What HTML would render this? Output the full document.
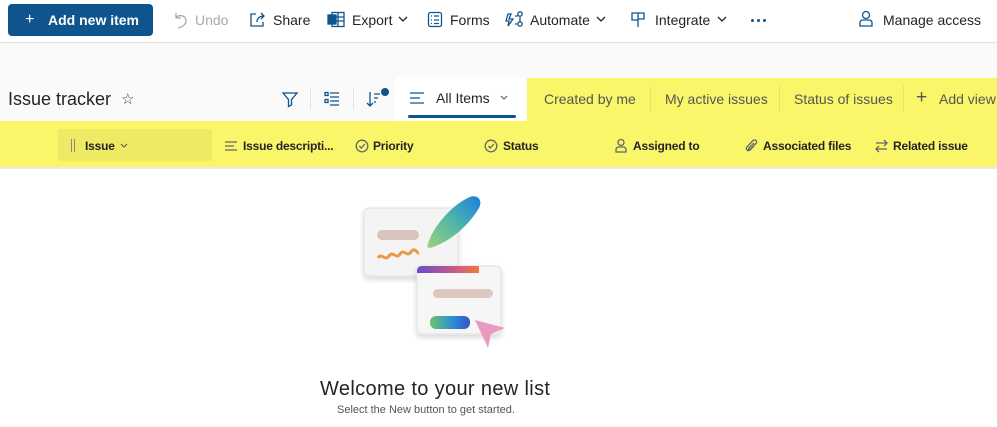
<!DOCTYPE html>
<html><head><meta charset="utf-8"><style>
*{margin:0;padding:0;box-sizing:border-box}
body{width:997px;height:427px;overflow:hidden;background:#fff;font-family:"Liberation Sans",sans-serif;color:#242424;position:relative}
.a{position:absolute;white-space:nowrap}
svg{position:absolute;fill:none;stroke:#0f548c;stroke-width:1.3}
.t{font-size:14px;top:12px}
.h{font-size:12px;font-weight:bold;top:139px;color:#242424;letter-spacing:-0.2px}
.v{font-size:14px;top:91px;color:#555}
.hs{stroke:#555}
</style></head><body>
<!-- top bar -->
<div class="a" style="left:8px;top:4px;width:145px;height:32px;background:#0f548c;border-radius:4px"></div>
<div class="a" style="left:25px;top:11px;font-size:16px;color:#fff;font-weight:300">+</div>
<div class="a" style="left:48px;top:12px;font-size:14px;color:#fff;font-weight:bold">Add new item</div>
<svg style="left:172px;top:11px" width="16" height="18" viewBox="0 0 16 18"><path d="M4 2v5h5M4 7c3-4 10-3 10 3 0 3-3 6-8 7" stroke="#aaa"/></svg>
<div class="a t" style="left:195px;color:#a8a8a8">Undo</div>
<svg style="left:249px;top:11px" width="17" height="17" viewBox="0 0 17 17"><path d="M7 3H2v12h12v-4M8 11c0-4 3-6 7-6M12 2l3 3-3 3"/></svg>
<div class="a t" style="left:273px">Share</div>
<svg style="left:327px;top:11px" width="18" height="17" viewBox="0 0 18 17"><rect x="5" y="1.5" width="12" height="14"/><path d="M5 6h12M5 10h12M11 2v13"/><rect x="1" y="4" width="8" height="9" fill="#0f548c"/></svg>
<div class="a t" style="left:352px">Export</div>
<svg style="left:398px;top:15px" width="10" height="8" viewBox="0 0 10 8"><path d="M1 2l4 4 4-4" stroke="#242424"/></svg>
<svg style="left:427px;top:11px" width="16" height="17" viewBox="0 0 16 17"><rect x="1.5" y="1.5" width="13" height="14" rx="2"/><path d="M4 5h1M7 5h5M4 9h1M7 9h5M4 12.5h1M7 12.5h5"/></svg>
<div class="a t" style="left:450px">Forms</div>
<svg style="left:505px;top:10px" width="19" height="18" viewBox="0 0 19 18"><path d="M3 4l3 0-2 5h4l-5 7 1-5H1zM10 6h3M15 7v5M12 14h-2"/><circle cx="15" cy="4" r="2.2"/><circle cx="15" cy="14" r="2.2"/></svg>
<div class="a t" style="left:530px">Automate</div>
<svg style="left:596px;top:15px" width="10" height="8" viewBox="0 0 10 8"><path d="M1 2l4 4 4-4" stroke="#242424"/></svg>
<svg style="left:630px;top:11px" width="16" height="17" viewBox="0 0 16 17"><path d="M2 2h6v7H2zM8 2h6v6H8zM2 9h6v7"/></svg>
<div class="a t" style="left:655px">Integrate</div>
<svg style="left:717px;top:15px" width="10" height="8" viewBox="0 0 10 8"><path d="M1 2l4 4 4-4" stroke="#242424"/></svg>
<div class="a" style="left:751px;top:19px;width:3px;height:3px;border-radius:50%;background:#0f548c"></div>
<div class="a" style="left:757px;top:19px;width:3px;height:3px;border-radius:50%;background:#0f548c"></div>
<div class="a" style="left:763px;top:19px;width:3px;height:3px;border-radius:50%;background:#0f548c"></div>
<svg style="left:858px;top:10px" width="16" height="18" viewBox="0 0 16 18"><circle cx="8" cy="5" r="3.5"/><path d="M2 16v-3c0-2 1-3 3-3h6c2 0 3 1 3 3v3z"/></svg>
<div class="a t" style="left:883px">Manage access</div>
<div class="a" style="left:0;top:42px;width:997px;height:1px;background:#e1e1e1"></div>
<!-- subheader -->
<div class="a" style="left:0;top:43px;width:997px;height:78px;background:#fafafa"></div>
<div class="a" style="left:8px;top:89px;font-size:18px;color:#242424">Issue tracker</div>
<div class="a" style="left:121px;top:90px;font-size:15px;color:#444">☆</div>
<svg style="left:281px;top:90px" width="18" height="18" viewBox="0 0 18 18"><path d="M2 3h14l-5.5 6.5V15l-3 1.5V9.5z"/></svg>
<div class="a" style="left:310px;top:88px;width:1px;height:22px;background:#e6e6e6"></div>
<svg style="left:324px;top:91px" width="16" height="16" viewBox="0 0 16 16"><path d="M6 2h9M6 6h9M6 10h9M6 14h9M1 1.5h3v3H1zM1 8.5h3v3H1z"/></svg>
<div class="a" style="left:353px;top:88px;width:1px;height:22px;background:#e6e6e6"></div>
<svg style="left:366px;top:90px" width="14" height="18" viewBox="0 0 14 18"><path d="M4 2v14M1 13l3 3 3-3M8 4h6M8 8h4M8 12h2"/></svg>
<div class="a" style="left:381px;top:88px;width:8px;height:8px;border-radius:50%;background:#0f548c"></div>
<div class="a" style="left:395px;top:77px;width:131px;height:44px;background:#fff;border-radius:4px 4px 0 0"></div>
<svg style="left:409px;top:91px" width="16" height="14" viewBox="0 0 16 14"><path d="M1 2h14M1 7h10M1 12h14"/></svg>
<div class="a" style="left:436px;top:90px;font-size:14px;color:#242424">All Items</div>
<svg style="left:500px;top:95px" width="8" height="6" viewBox="0 0 8 6"><path d="M1 1l3 3 3-3" stroke="#555" stroke-width="1"/></svg>
<div class="a" style="left:408px;top:115px;width:108px;height:3px;background:#0f548c;border-radius:2px"></div>
<div class="a" style="left:527px;top:78px;width:470px;height:43px;background:#faf66a"></div>
<div class="a v" style="left:544px">Created by me</div>
<div class="a" style="left:650px;top:86px;width:1px;height:26px;background:#e6e070"></div>
<div class="a v" style="left:665px">My active issues</div>
<div class="a" style="left:779px;top:86px;width:1px;height:26px;background:#e6e070"></div>
<div class="a v" style="left:794px">Status of issues</div>
<div class="a" style="left:903px;top:86px;width:1px;height:26px;background:#e6e070"></div>
<div class="a" style="left:916px;top:87px;font-size:19px;color:#555;font-weight:300">+</div>
<div class="a v" style="left:939px">Add view</div>
<!-- header row -->
<div class="a" style="left:0;top:121px;width:997px;height:47px;background:#faf66a"></div>
<div class="a" style="left:0;top:167px;width:997px;height:2px;background:#eaeaea"></div>
<div class="a" style="left:58px;top:129px;width:154px;height:32px;background:#eeea63;border-radius:3px"></div>
<div class="a" style="left:71px;top:139px;width:1px;height:13px;background:#888"></div>
<div class="a" style="left:74px;top:139px;width:1px;height:13px;background:#888"></div>
<div class="a h" style="left:85px">Issue</div>
<svg style="left:120px;top:143px" width="8" height="6" viewBox="0 0 8 6"><path d="M1 1l3 3 3-3" stroke="#555" stroke-width="1"/></svg>
<svg class="hs" style="left:224px;top:140px" width="14" height="12" viewBox="0 0 14 12"><path d="M1 2h12M1 6h9M1 10h12" stroke="#666"/></svg>
<div class="a h" style="left:243px">Issue descripti...</div>
<svg style="left:355px;top:139px" width="14" height="14" viewBox="0 0 14 14"><circle cx="7" cy="7" r="5.8" stroke="#666"/><path d="M4.3 7l2 2 3.5-4" stroke="#666"/></svg>
<div class="a h" style="left:373px">Priority</div>
<svg style="left:484px;top:139px" width="14" height="14" viewBox="0 0 14 14"><circle cx="7" cy="7" r="5.8" stroke="#666"/><path d="M4.3 7l2 2 3.5-4" stroke="#666"/></svg>
<div class="a h" style="left:503px">Status</div>
<svg style="left:614px;top:138px" width="14" height="15" viewBox="0 0 14 15"><circle cx="7" cy="4.5" r="3" stroke="#666"/><path d="M2 14v-2c0-2 1-3 3-3h4c2 0 3 1 3 3v2z" stroke="#666"/></svg>
<div class="a h" style="left:633px">Assigned to</div>
<svg style="left:745px;top:139px" width="13" height="14" viewBox="0 0 13 14"><path d="M9 4l-5 5c-1 1 0 2.5 1 1.5l6-6c2-2-1-5-3-3L2 8c-2 2 1 5 3 3l4-4" stroke="#666"/></svg>
<div class="a h" style="left:763px">Associated files</div>
<svg style="left:875px;top:139px" width="13" height="14" viewBox="0 0 13 14"><path d="M1 4h11M9 1l3 3-3 3M12 10H1M4 7l-3 3 3 3" stroke="#666"/></svg>
<div class="a h" style="left:893px">Related issue</div>
<!-- illustration -->
<svg style="left:360px;top:192px;stroke:none" width="150" height="160" viewBox="0 0 150 160">
<defs>
<linearGradient id="pen" x1="0" y1="1" x2="1" y2="0"><stop offset="0" stop-color="#9dd07a"/><stop offset="0.5" stop-color="#4fb6a8"/><stop offset="1" stop-color="#1a7fe0"/></linearGradient>
<linearGradient id="bar" x1="0" x2="1"><stop offset="0" stop-color="#6bc36f"/><stop offset="0.6" stop-color="#2a8ad8"/><stop offset="1" stop-color="#3a50c8"/></linearGradient>
<linearGradient id="top" x1="0" x2="1"><stop offset="0" stop-color="#6a4bc8"/><stop offset="0.6" stop-color="#c75a8a"/><stop offset="1" stop-color="#ef7a40"/></linearGradient>
<filter id="sh"><feDropShadow dx="0" dy="3" stdDeviation="3" flood-opacity="0.15"/></filter>
</defs>
<rect x="4" y="16" width="94" height="68" rx="5" fill="#f4f4f4" stroke="#e4e4e4" filter="url(#sh)"/>
<rect x="17" y="38" width="42" height="10" rx="5" fill="#d8c4bc"/>
<path d="M18 66c4-6 7 4 11-2s7 4 11-2 7 4 11-2 6 2 8 1" stroke="#e99a45" stroke-width="3" fill="none"/>
<path d="M68 52c5-18 25-40 42-47 8-3 13 4 9 11-10 17-28 33-46 39-5 2-7 0-5-3z" fill="url(#pen)"/>
<rect x="57" y="74" width="84" height="68" rx="5" fill="#f6f6f6" stroke="#e4e4e4" filter="url(#sh)"/>
<path d="M62 74h57v7H57v-2c0-3 2-5 5-5z" fill="url(#top)"/>
<rect x="73" y="97" width="60" height="9" rx="4.5" fill="#dcc8c0"/>
<rect x="70" y="124" width="40" height="13" rx="6" fill="url(#bar)"/>
<path d="M115 128l30 8-14 6-3 14z" fill="#e89ac0"/>
</svg>
<div class="a" style="left:320px;top:378px;font-size:20px;color:#242424;letter-spacing:0.35px">Welcome to your new list</div>
<div class="a" style="left:337px;top:404px;font-size:11px;color:#555">Select the New button to get started.</div>
</body></html>
